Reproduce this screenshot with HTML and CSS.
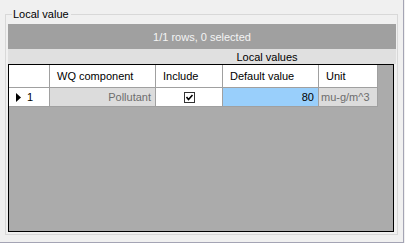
FILE: index.html
```html
<!DOCTYPE html>
<html lang="en">
<head>
    <meta charset="UTF-8">
    <title>Local value</title>
    <link rel="stylesheet" href="styles.css">
</head>
<body>
    <div class="window">
        <div class="group">
            <span class="legend">Local value</span>
            <div class="status">1/1 rows, 0 selected</div>
            <div class="band"><span class="band-title">Local values</span></div>
            <div class="grid">
                <div class="cells">
                    <div class="cell head"></div>
                    <div class="cell head">WQ component</div>
                    <div class="cell head">Include</div>
                    <div class="cell head">Default value</div>
                    <div class="cell head">Unit</div>

                    <div class="cell rowhead">
                        <svg width="5" height="9" viewBox="0 0 5 9"><polygon points="0,0 5,4.5 0,9" fill="#000"/></svg>
                        <span>1</span>
                    </div>
                    <div class="cell readonly right">Pollutant</div>
                    <div class="cell check">
                        <svg width="11" height="11" viewBox="0 0 11 11">
                            <rect x="0.5" y="0.5" width="10" height="10" fill="#fff" stroke="#333"/>
                            <polyline points="2.5,5 4.5,7.5 8.5,3" fill="none" stroke="#000" stroke-width="1.6"/>
                        </svg>
                    </div>
                    <div class="cell selected right">80</div>
                    <div class="cell readonly">mu-g/m^3</div>
                </div>
            </div>
        </div>
    </div>
</body>
</html>
```

FILE: styles.css
```css
body {
    margin: 0;
    background-color: #f0f0f0;
    font-family: "Liberation Sans", Arial, sans-serif;
    font-size: 11px;
    color: #000;
}
.window {
    box-sizing: border-box;
    width: 404px;
    height: 243px;
    border-right: 1px solid #a4a4b4;
    border-bottom: 1px solid #a4a4b4;
    padding: 14px 0 0 5px;
}
.group {
    position: relative;
    box-sizing: border-box;
    width: 393px;
    height: 221px;
    border: 1px solid #d8d8d8;
    padding: 9px 1px 1px 2px;
    display: flex;
    flex-direction: column;
}
.legend {
    position: absolute;
    left: 6px;
    top: -8px;
    padding: 0 2px 0 1px;
    background-color: #f0f0f0;
    line-height: 15px;
}
.status {
    height: 25px;
    background-color: #a0a0a0;
    color: #f4f4f4;
    display: flex;
    align-items: center;
    justify-content: center;
}
.band {
    height: 15px;
    background-color: #e0e0e0;
    display: flex;
    align-items: center;
}
.band-title {
    margin-left: 149px;
    width: 220px;
    text-align: center;
}
.grid {
    flex: 1;
    width: 386px;
    margin-bottom: 1px;
    box-sizing: border-box;
    background-color: #ababab;
    border: 1px solid #000;
}
.cells {
    display: inline-grid;
    grid-template-columns: 40px 105px 66px 95px 58px;
    grid-template-rows: 22px 18px;
    gap: 1px;
    background-color: #a0a0a0;
    padding: 0 1px 1px 0;
}
.cell {
    background-color: #fff;
    display: flex;
    align-items: center;
    padding: 0 4px;
    white-space: nowrap;
    overflow: hidden;
}
.head {
    padding-left: 7px;
}
.rowhead {
    padding-left: 7px;
    gap: 6px;
}
.readonly {
    background-color: #dcdcdc;
    color: #6d6d6d;
    padding-left: 2px;
}
.right {
    justify-content: flex-end;
}
.check {
    justify-content: center;
    padding-left: 5px;
}
.selected {
    background-color: #99cffb;
}
```
